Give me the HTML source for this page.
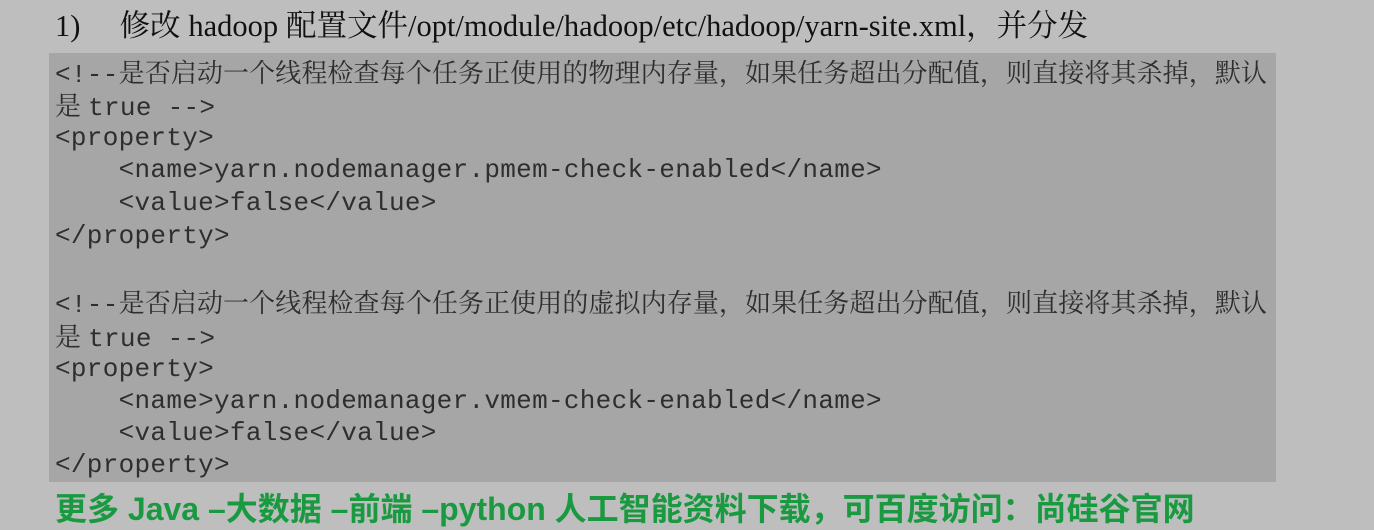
<!DOCTYPE html>
<html><head><meta charset="utf-8"><style>
body{margin:0;width:1374px;height:507px;background:#bebebe;overflow:hidden;position:relative}
.t{position:absolute;left:55px;top:1px;font:30.5px "Liberation Serif","Noto Serif CJK SC",serif;color:#111;white-space:pre;word-spacing:0.2px}
.box{position:absolute;left:49px;top:53px;width:1227px;height:429px;background:#a6a6a6}
.l{position:absolute;left:55px;font:26px/32px "Liberation Mono","Noto Sans CJK SC",monospace;color:#2e2e2e;white-space:pre;letter-spacing:0.3px}
.l span{font-family:"Noto Serif CJK SC",serif;letter-spacing:0.1px}
.g{position:absolute;left:55px;top:484px;font:bold 32px "Liberation Sans","Noto Sans CJK SC",sans-serif;color:#1a9a40;white-space:pre}
</style></head><body>
<div class="t">1)     修改 hadoop 配置文件/opt/module/hadoop/etc/hadoop/yarn-site.xml，并分发</div>
<div class="box"></div>
<div class="l" style="top:56px">&lt;!--<span>是否启动一个线程检查每个任务正使用的物理内存量，如果任务超出分配值，则直接将其杀掉，默认</span></div>
<div class="l" style="top:89px"><span style="margin-right:7px">是</span>true --&gt;</div>
<div class="l" style="top:122px">&lt;property&gt;</div>
<div class="l" style="top:154px">    &lt;name&gt;yarn.nodemanager.pmem-check-enabled&lt;/name&gt;</div>
<div class="l" style="top:187px">    &lt;value&gt;false&lt;/value&gt;</div>
<div class="l" style="top:220px">&lt;/property&gt;</div>
<div class="l" style="top:286px">&lt;!--<span>是否启动一个线程检查每个任务正使用的虚拟内存量，如果任务超出分配值，则直接将其杀掉，默认</span></div>
<div class="l" style="top:320px"><span style="margin-right:7px">是</span>true --&gt;</div>
<div class="l" style="top:353px">&lt;property&gt;</div>
<div class="l" style="top:385px">    &lt;name&gt;yarn.nodemanager.vmem-check-enabled&lt;/name&gt;</div>
<div class="l" style="top:417px">    &lt;value&gt;false&lt;/value&gt;</div>
<div class="l" style="top:449px">&lt;/property&gt;</div>
<div class="g">更多 Java –大数据 –前端 –python 人工智能资料下载，可百度访问：尚硅谷官网</div>
</body></html>
